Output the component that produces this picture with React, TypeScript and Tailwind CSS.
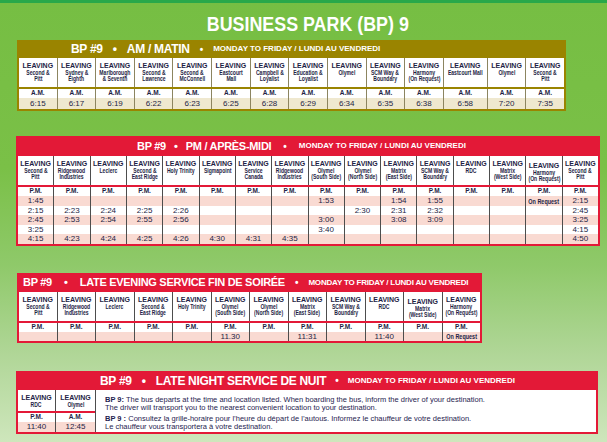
import React from "react";

const SANS = "font-['Liberation_Sans',Arial,sans-serif]";
const INK = "text-[#1e1e45]";

type Col = { s: string[]; low?: boolean };

function Narrow({ children, className }: { children: React.ReactNode; className?: string }) {
  return <span className={`inline-block scale-x-[0.78] whitespace-nowrap ${className ?? ""}`}>{children}</span>;
}

function LabelCell({ c }: { c: Col }) {
  return (
    <div className={`bg-white flex flex-col items-center pt-[3px] ${INK} overflow-hidden`}>
      <div className={`${SANS} font-bold text-[7px] leading-[9px] whitespace-nowrap ${c.low ? "mt-[2px]" : ""}`}>LEAVING</div>
      {c.s.map((s, i) => (
        <div key={i} className={`${SANS} font-bold text-[6.5px] leading-[6.3px] whitespace-nowrap`}>
          <Narrow>{s}</Narrow>
        </div>
      ))}
    </div>
  );
}

function Period({ t, bg }: { t: string; bg: string }) {
  return (
    <div className={`${bg} flex items-center justify-center ${INK} ${SANS} font-bold text-[6.5px] leading-none`}>
      {t}
    </div>
  );
}

function Time({ t, bg }: { t: string; bg: string }) {
  const req = t === "On Request";
  return (
    <div
      className={`${bg} flex items-center justify-center overflow-hidden ${INK} leading-none whitespace-nowrap ${SANS} ${
        req ? "font-bold text-[7px]" : "text-[8px]"
      }`}
    >
      {req ? <Narrow>{t}</Narrow> : t}
    </div>
  );
}

function Header({
  title,
  pl,
  h,
  big,
  track,
  small,
  m1,
  m2,
}: {
  title: string;
  pl: string;
  h: string;
  big: string;
  track: string;
  small: string;
  m1: string;
  m2: string;
}) {
  return (
    <div className={`${h} ${pl} flex items-center text-white font-bold ${SANS} whitespace-nowrap`}>
      <span className={`${big} ${track}`}>BP #9</span>
      <span className={`${big} ${m1}`}>•</span>
      <span className={`${big} ${track}`}>{title}</span>
      <span className={`text-[10px] ${m2}`}>•</span>
      <span className={`text-[8px] ${small}`}>MONDAY TO FRIDAY / LUNDI AU VENDREDI</span>
    </div>
  );
}

const amCols: Col[] = [
  { s: ["Second &", "Pitt"] },
  { s: ["Sydney &", "Eighth"] },
  { s: ["Marlborough", "& Seventh"] },
  { s: ["Second &", "Lawrence"] },
  { s: ["Second &", "McConnell"] },
  { s: ["Eastcourt", "Mall"] },
  { s: ["Campbell &", "Loyalist"] },
  { s: ["Education &", "Loyalist"] },
  { s: ["Olymel"] },
  { s: ["SCM Way &", "Boundary"] },
  { s: ["Harmony", "(On Request)"] },
  { s: ["Eastcourt Mall"] },
  { s: ["Olymel"] },
  { s: ["Second &", "Pitt"] },
];
const amTimes = ["6:15", "6:17", "6:19", "6:22", "6:23", "6:25", "6:28", "6:29", "6:34", "6:35", "6:38", "6:58", "7:20", "7:35"];

const pmCols: Col[] = [
  { s: ["Second &", "Pitt"] },
  { s: ["Ridgewood", "Industries"] },
  { s: ["Leclerc"] },
  { s: ["Second &", "East Ridge"] },
  { s: ["Holy Trinity"] },
  { s: ["Sigmapoint"] },
  { s: ["Service", "Canada"] },
  { s: ["Ridgewood", "Industries"] },
  { s: ["Olymel", "(South Side)"] },
  { s: ["Olymel", "(North Side)"] },
  { s: ["Matrix", "(East Side)"] },
  { s: ["SCM Way &", "Boundary"] },
  { s: ["RDC"] },
  { s: ["Matrix", "(West Side)"] },
  { s: ["Harmony", "(On Request)"], low: true },
  { s: ["Second &", "Pitt"] },
];
const pmRows: string[][] = [
  ["1:45", "", "", "", "", "", "", "", "1:53", "", "1:54", "1:55", "", "", "On Request", "2:15"],
  ["2:15", "2:23", "2:24", "2:25", "2:26", "", "", "", "", "2:30", "2:31", "2:32", "", "", "", "2:45"],
  ["2:45", "2:53", "2:54", "2:55", "2:56", "", "", "", "3:00", "", "3:08", "3:09", "", "", "", "3:25"],
  ["3:25", "", "", "", "", "", "", "", "3:40", "", "", "", "", "", "", "4:15"],
  ["4:15", "4:23", "4:24", "4:25", "4:26", "4:30", "4:31", "4:35", "", "", "", "", "", "", "", "4:50"],
];
const pmRowH = ["h-[10px]", "h-[9px]", "h-[10px]", "h-[9px]", "h-[10px]"];

const leCols: Col[] = [
  { s: ["Second &", "Pitt"] },
  { s: ["Ridgewood", "Industries"] },
  { s: ["Leclerc"] },
  { s: ["Second &", "East Ridge"] },
  { s: ["Holy Trinity"] },
  { s: ["Olymel", "(South Side)"] },
  { s: ["Olymel", "(North Side)"] },
  { s: ["Matrix", "(East Side)"] },
  { s: ["SCM Way &", "Boundary"] },
  { s: ["RDC"] },
  { s: ["Matrix", "(West Side)"], low: true },
  { s: ["Harmony", "(On Request)"] },
];
const leTimes = ["", "", "", "", "", "11.30", "", "11:31", "", "11:40", "", "On Request"];

const PINK = "bg-[#f9dad2]";
const WHITE = "bg-white";
const BEIGE = "bg-[#efe8cf]";

export default function App() {
  return (
    <div className="w-[607px] h-[442px] overflow-hidden flex flex-col bg-[linear-gradient(180deg,#76be43_0%,#7ac047_38%,#8fc96a_60%,#b0d697_80%,#cee6bc_100%)]">
      <div className="h-[3px] bg-[#28a84a] shrink-0" />

      {/* Title */}
      <div className="h-[37px] w-[584px] ml-[16px] pt-[10px] flex justify-center shrink-0">
        <h1 className={`${SANS} font-bold text-[21px] leading-[21px] text-white whitespace-nowrap inline-block scale-x-[0.85]`}>
          BUSINESS PARK (BP) 9
        </h1>
      </div>

      {/* AM */}
      <div className="ml-[17px] w-[549px] bg-[#9a8400] px-[2px] pb-[2px] shrink-0">
        <Header
          title="AM / MATIN"
          pl="pl-[52px]"
          h="h-[18px]"
          big="text-[12px]"
          track="tracking-[-0.3px]"
          small=""
          m1="mx-[10px]"
          m2="mx-[10px]"
        />
        <div className="grid grid-cols-[repeat(11,minmax(0,1fr))_43px_repeat(2,minmax(0,1fr))] gap-x-[1px] bg-[#8c8560] h-[29px]">
          {amCols.map((c, i) => (
            <LabelCell key={i} c={c} />
          ))}
        </div>
        <div className="h-[2px]" />
        <div className="grid grid-cols-[repeat(11,minmax(0,1fr))_43px_repeat(2,minmax(0,1fr))] grid-rows-[9px_11px] gap-x-[1px] bg-[#8c8560]">
          {amCols.map((_, i) => (
            <Period key={"p" + i} t="A.M." bg={WHITE} />
          ))}
          {amTimes.map((t, i) => (
            <Time key={"t" + i} t={t} bg={BEIGE} />
          ))}
        </div>
      </div>

      {/* PM */}
      <div className="mt-[25px] ml-[16px] w-[584px] bg-[#e31937] px-[2px] pb-[2px] shrink-0">
        <Header
          title="PM / APRÈS-MIDI"
          pl="pl-[119px]"
          h="h-[20px]"
          big="text-[11px]"
          track="tracking-[-0.3px]"
          small=""
          m1="mx-[8px]"
          m2="mx-[12px]"
        />
        <div className="grid grid-cols-16 gap-x-[1px] bg-[#4d4d4d] h-[29px]">
          {pmCols.map((c, i) => (
            <LabelCell key={i} c={c} />
          ))}
        </div>
        <div className="h-[2px]" />
        <div className="grid grid-cols-16 gap-x-[1px] bg-[#4d4d4d]">
          {pmCols.map((_, i) => (
            <div key={"p" + i} className="h-[9px] grid">
              <Period t="P.M." bg={WHITE} />
            </div>
          ))}
          {pmRows.map((row, r) =>
            row.map((t, i) => (
              <div key={r + "-" + i} className={`${pmRowH[r]} grid`}>
                <Time t={t} bg={r % 2 === 0 ? PINK : WHITE} />
              </div>
            ))
          )}
        </div>
      </div>

      {/* Late evening */}
      <div className="mt-[27px] ml-[17px] w-[465px] bg-[#e31937] px-[2px] pb-[2px] shrink-0">
        <Header
          title="LATE EVENING SERVICE FIN DE SOIRÉE"
          pl="pl-[4px]"
          h="h-[19px]"
          big="text-[11px]"
          track="tracking-[-0.3px]"
          small="tracking-[-0.2px]"
          m1="mx-[12px]"
          m2="mx-[10px]"
        />
        <div className="grid grid-cols-12 gap-x-[1px] bg-[#4d4d4d] h-[29px]">
          {leCols.map((c, i) => (
            <LabelCell key={i} c={c} />
          ))}
        </div>
        <div className="h-[2px]" />
        <div className="grid grid-cols-12 grid-rows-[9px_9px] gap-x-[1px] bg-[#4d4d4d]">
          {leCols.map((_, i) => (
            <Period key={"p" + i} t="P.M." bg={WHITE} />
          ))}
          {leTimes.map((t, i) => (
            <Time key={"t" + i} t={t} bg={PINK} />
          ))}
        </div>
      </div>

      {/* Late night */}
      <div className="mt-[28px] ml-[16px] w-[582px] bg-[#e31937] px-[2px] pb-[2px] shrink-0">
        <Header
          title="LATE NIGHT SERVICE DE NUIT"
          pl="pl-[82px]"
          h="h-[19px]"
          big="text-[12px]"
          track="tracking-[-0.3px]"
          small=""
          m1="mx-[10px]"
          m2="mx-[9px]"
        />
        <div className="flex">
          <div className="w-[77px] flex flex-col">
            <div className="grid grid-cols-[37px_39px] gap-x-[1px] bg-[#4d4d4d] h-[21px]">
              <LabelCell c={{ s: ["RDC"] }} />
              <LabelCell c={{ s: ["Olymel"] }} />
            </div>
            <div className="h-[2px]" />
            <div className="grid grid-cols-[37px_39px] grid-rows-[9px_10px] gap-x-[1px] bg-[#4d4d4d]">
              <Period t="P.M." bg={WHITE} />
              <Period t="A.M." bg={WHITE} />
              <Time t="11:40" bg={PINK} />
              <Time t="12:45" bg={PINK} />
            </div>
          </div>
          <div className="w-[1px] bg-[#4d4d4d]" />
          <div className={`flex-1 bg-white pl-[9px] pt-[6px] ${SANS} text-[7.5px] leading-[8px] text-[#1f2350] whitespace-nowrap`}>
            <p>
              <b>BP 9:</b> The bus departs at the time and location listed. When boarding the bus, inform the driver of your destination.
              <br />
              The driver will transport you to the nearest convenient location to your destination.
            </p>
            <p className="mt-[3px]">
              <b>BP 9 :</b> Consultez la grille-horaire pour l’heure du départ de l’autous. Informez le chauffeur de votre destination.
              <br />
              Le chauffeur vous transportera à votre destination.
            </p>
          </div>
        </div>
      </div>
    </div>
  );
}
